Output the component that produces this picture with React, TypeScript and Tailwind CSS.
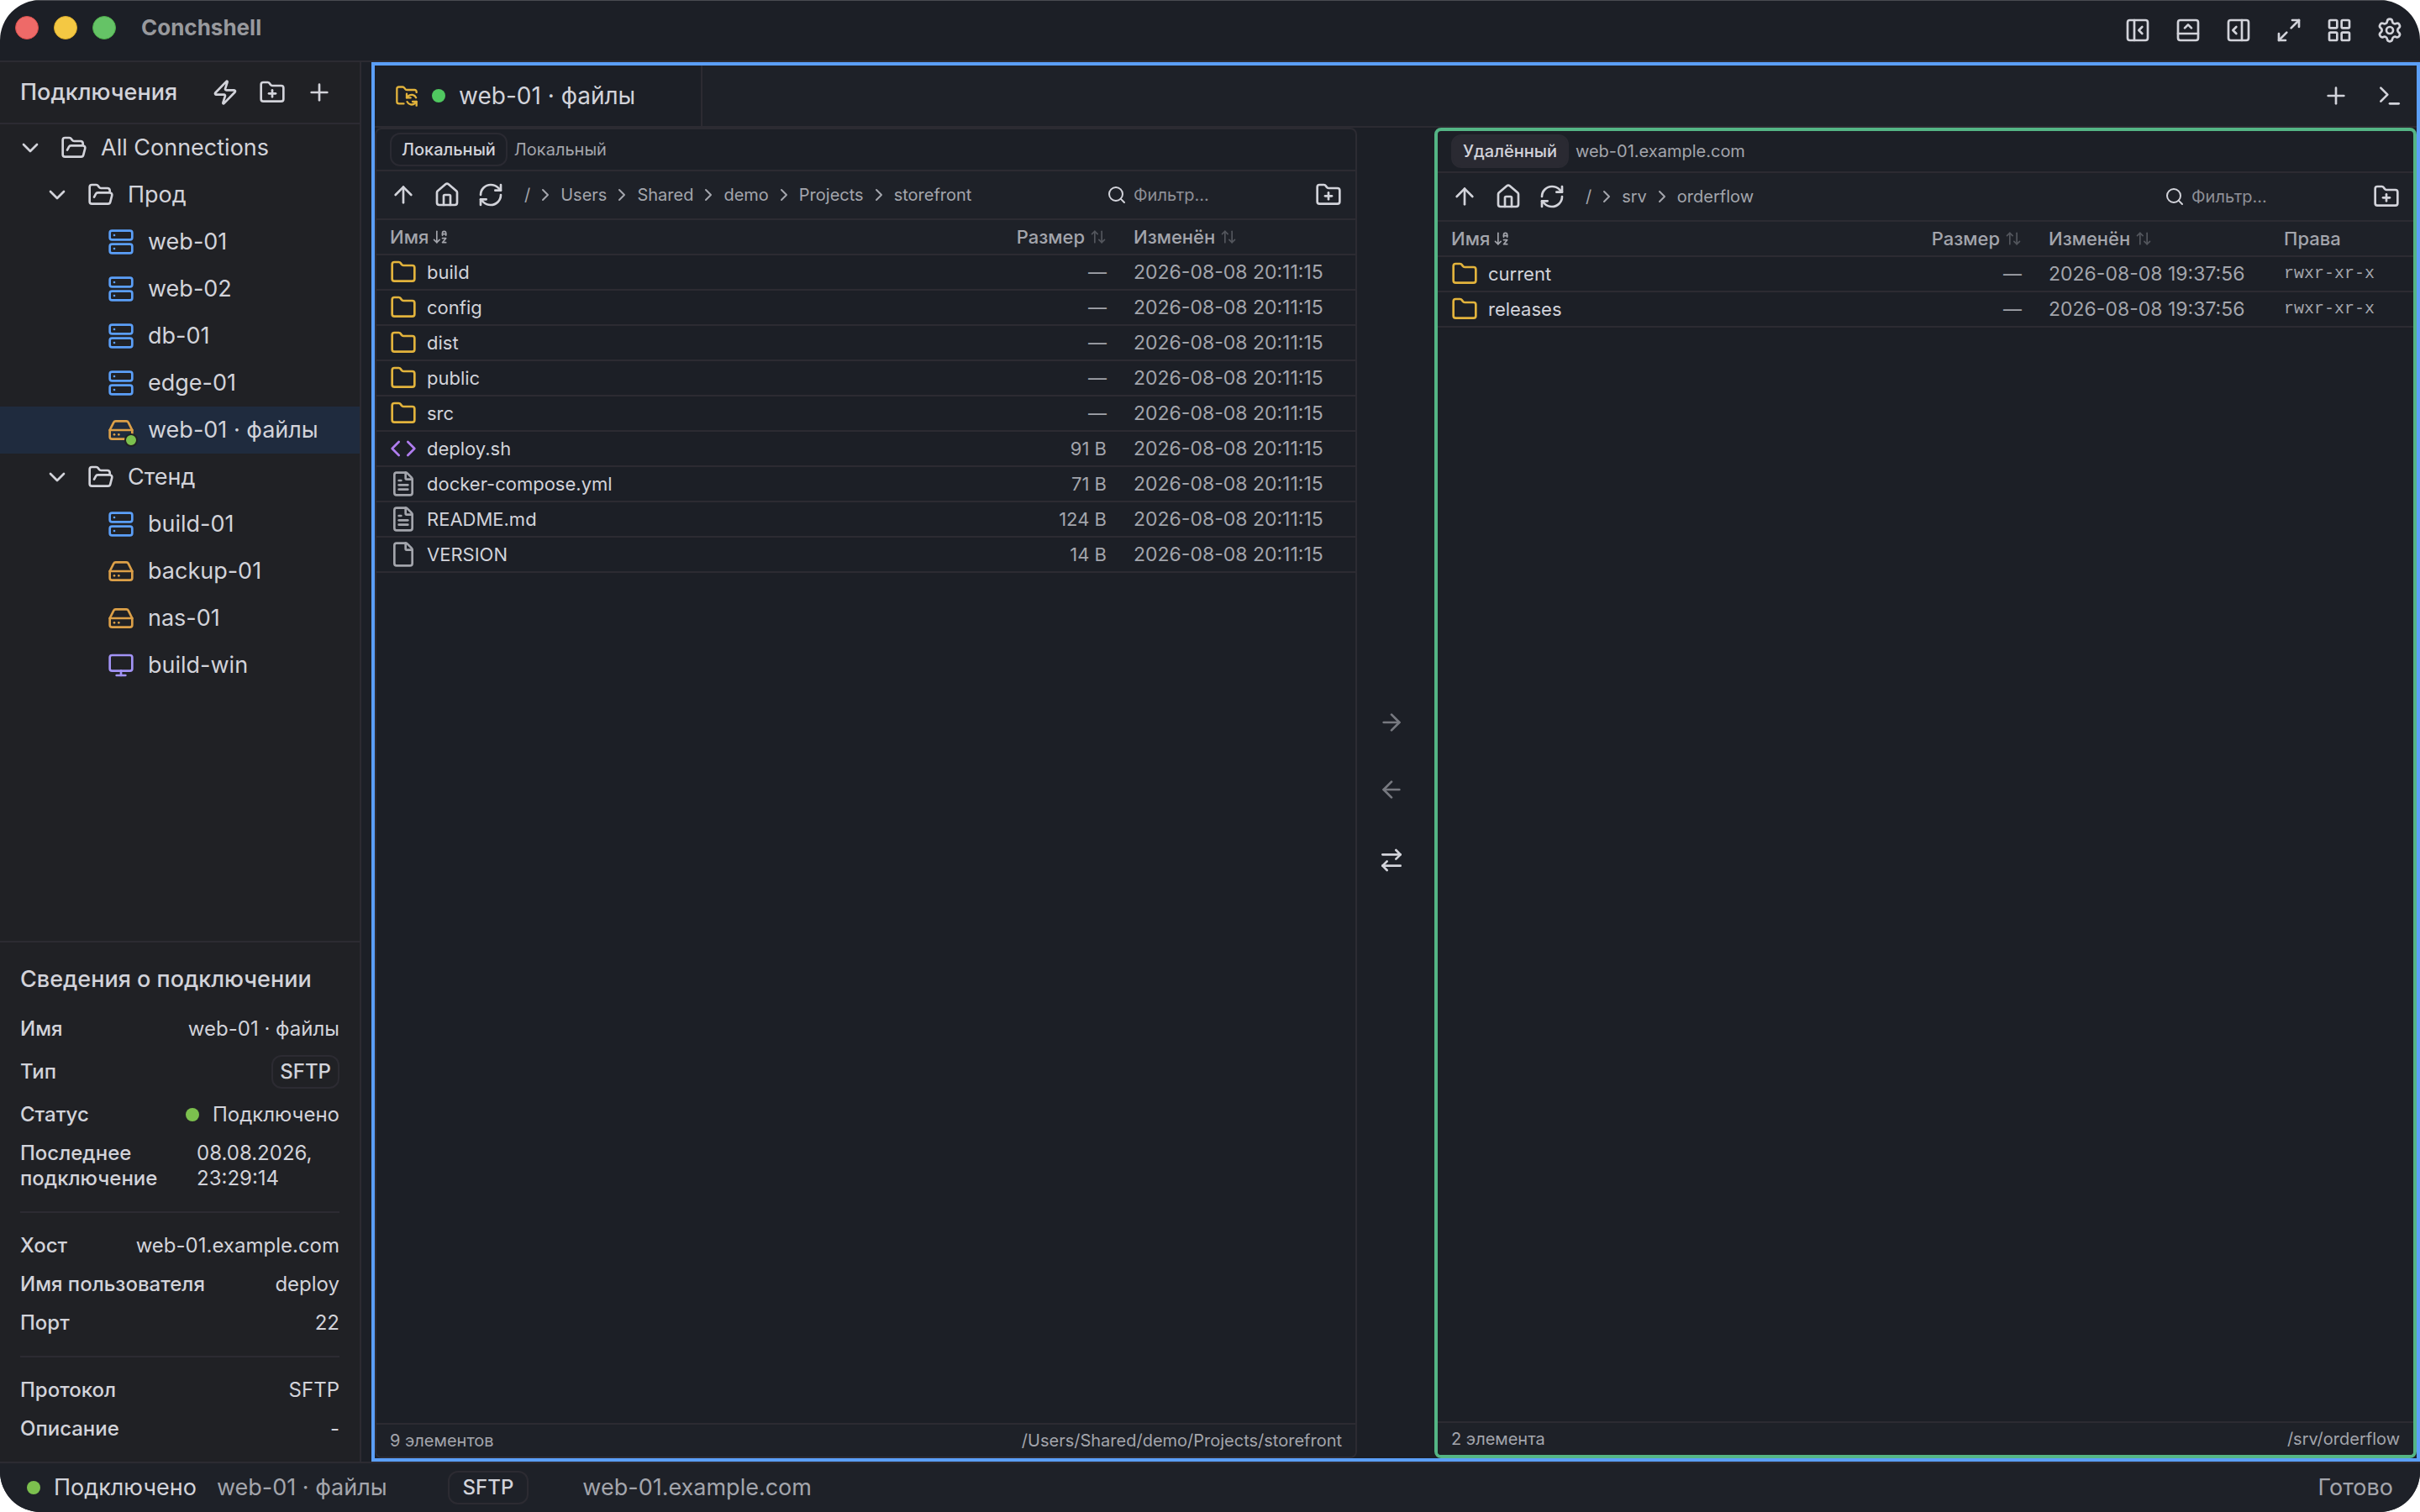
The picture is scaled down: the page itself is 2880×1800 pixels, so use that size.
import { ReactNode } from "react"
import { ArrowDownAZ, ArrowLeft, ArrowRight, ArrowRightLeft, ArrowUp, ArrowUpDown, ChevronDown, ChevronRight, Code, File, FileText, Folder, FolderOpen, FolderPlus, FolderSync, HardDrive, House, LayoutGrid, LucideIcon, Maximize2, Monitor, PanelBottomOpen, PanelLeftClose, PanelRightOpen, Plus, RefreshCw, Search, Server, Settings, Terminal, Zap } from "lucide-react"

type Connection = {
    name: string
    icon: LucideIcon
    color: string
    active?: boolean
}

type Entry = {
    name: string
    icon: LucideIcon
    color: string
    size: string
    date: string
    mode?: string
}

const BLUE = "text-[#5b9ff8]"
const ORANGE = "text-[#dca048]"
const YELLOW = "text-[#e2b33c]"
const GRAY = "text-[#a3a5ac]"

const groups: { name: string, items: Connection[] }[] = [
    {
        name: "Прод",
        items: [
            { name: "web-01", icon: Server, color: BLUE },
            { name: "web-02", icon: Server, color: BLUE },
            { name: "db-01", icon: Server, color: BLUE },
            { name: "edge-01", icon: Server, color: BLUE },
            { name: "web-01 · файлы", icon: HardDrive, color: ORANGE, active: true },
        ]
    },
    {
        name: "Стенд",
        items: [
            { name: "build-01", icon: Server, color: BLUE },
            { name: "backup-01", icon: HardDrive, color: ORANGE },
            { name: "nas-01", icon: HardDrive, color: ORANGE },
            { name: "build-win", icon: Monitor, color: "text-[#a293f5]" },
        ]
    }
]

const localDate = "2026-08-08 20:11:15"
const remoteDate = "2026-08-08 19:37:56"

const localFiles: Entry[] = [
    { name: "build", icon: Folder, color: YELLOW, size: "—", date: localDate },
    { name: "config", icon: Folder, color: YELLOW, size: "—", date: localDate },
    { name: "dist", icon: Folder, color: YELLOW, size: "—", date: localDate },
    { name: "public", icon: Folder, color: YELLOW, size: "—", date: localDate },
    { name: "src", icon: Folder, color: YELLOW, size: "—", date: localDate },
    { name: "deploy.sh", icon: Code, color: "text-[#b07df0]", size: "91 B", date: localDate },
    { name: "docker-compose.yml", icon: FileText, color: GRAY, size: "71 B", date: localDate },
    { name: "README.md", icon: FileText, color: GRAY, size: "124 B", date: localDate },
    { name: "VERSION", icon: File, color: GRAY, size: "14 B", date: localDate },
]

const remoteFiles: Entry[] = [
    { name: "current", icon: Folder, color: YELLOW, size: "—", date: remoteDate, mode: "rwxr-xr-x" },
    { name: "releases", icon: Folder, color: YELLOW, size: "—", date: remoteDate, mode: "rwxr-xr-x" },
]

const IconButton = ({ icon: Icon, label, className = "" }: { icon: LucideIcon, label: string, className?: string }) => (
    <button type="button" aria-label={label} className={`shrink-0 ${className}`}>
        <Icon className="size-8" />
    </button>
)

const TitleBar = () => <header className="flex h-[74px] shrink-0 items-center justify-between border-t border-b-2 border-t-[#4a4c51] border-b-[#2c2b32] pr-5 pl-[18px]">
    <div className="flex items-center gap-[18px] pb-2">
        <button type="button" aria-label="Закрыть" className="size-7 rounded-full border border-[#d8504d] bg-[#ee6a68]" />
        <button type="button" aria-label="Свернуть" className="size-7 rounded-full border border-[#d9ab2b] bg-[#f4c843]" />
        <button type="button" aria-label="Развернуть" className="size-7 rounded-full border border-[#4eac4b] bg-[#65c366]" />
        <h1 className="ml-3 text-[26px] leading-8 font-bold text-[#98999d]">Conchshell</h1>
    </div>
    <nav className="flex items-center gap-7 pb-0.5">
        <IconButton icon={PanelLeftClose} label="Левая панель" />
        <IconButton icon={PanelBottomOpen} label="Нижняя панель" />
        <IconButton icon={PanelRightOpen} label="Правая панель" />
        <IconButton icon={Maximize2} label="Во весь экран" />
        <IconButton icon={LayoutGrid} label="Сетка" />
        <IconButton icon={Settings} label="Настройки" />
    </nav>
</header>

const Group = ({ name, root }: { name: string, root?: boolean }) => (
    <button type="button" className={`flex h-14 w-full items-center text-[27px] ${root ? "pl-5" : "pl-[52px]"}`}>
        <ChevronDown className="size-8" />
        <FolderOpen className="ml-5 size-8" />
        <span className="ml-4">{name}</span>
    </button>
)

const Tree = () => <div className="min-h-0 flex-1 overflow-hidden">
    <Group name="All Connections" root />
    {groups.map(group => <div key={group.name}>
        <Group name={group.name} />
        {group.items.map(({ name, icon: Icon, color, active }) => (
            <button key={name} type="button" className={`flex h-14 w-full items-center gap-4 pl-32 text-[27px] ${active ? "bg-[#1f2b3e]" : ""}`}>
                <span className="relative">
                    <Icon className={`size-8 ${color}`} />
                    {active && <span className="absolute -right-1 -bottom-1 size-4 rounded-full border-2 border-[#202125] bg-[#7cc04e]" />}
                </span>
                <span>{name}</span>
            </button>
        ))}
    </div>)}
</div>

const Detail = ({ label, children }: { label: string, children: ReactNode }) => (
    <div className="flex items-center justify-between">
        <dt className="font-medium">{label}</dt>
        <dd>{children}</dd>
    </div>
)

const Badge = ({ children, wide }: { children: ReactNode, wide?: boolean }) => (
    <span className={`flex h-10 items-center rounded-xl border-2 border-[#2c2b32] text-2xl font-medium ${wide ? "px-4" : "px-2"}`}>{children}</span>
)

const Details = () => <section className="border-t-2 border-[#2c2b32] p-6 text-2xl leading-[30px]">
    <h2 className="mb-6 text-[27px] leading-10 font-medium">Сведения о подключении</h2>
    <dl className="flex flex-col gap-4">
        <Detail label="Имя">web-01 · файлы</Detail>
        <Detail label="Тип"><Badge>SFTP</Badge></Detail>
        <Detail label="Статус">
            <span className="flex items-center gap-4"><span className="size-4 rounded-full bg-[#7cc04e]" />Подключено</span>
        </Detail>
        <div className="flex justify-between">
            <dt className="w-44 font-medium">Последнее подключение</dt>
            <dd className="w-[170px]">08.08.2026, 23:29:14</dd>
        </div>
    </dl>
    <hr className="my-6 border-t-2 border-[#2c2b32]" />
    <dl className="flex flex-col gap-4">
        <Detail label="Хост">web-01.example.com</Detail>
        <Detail label="Имя пользователя">deploy</Detail>
        <Detail label="Порт">22</Detail>
    </dl>
    <hr className="my-6 border-t-2 border-[#2c2b32]" />
    <dl className="flex flex-col gap-4">
        <Detail label="Протокол">SFTP</Detail>
        <Detail label="Описание">-</Detail>
    </dl>
</section>

const Sidebar = () => <aside className="flex w-[430px] shrink-0 flex-col border-r-2 border-[#2c2b32] bg-[#202125]">
    <div className="flex h-[74px] shrink-0 items-center border-b-2 border-[#2c2b32] pr-8 pl-6">
        <h2 className="flex-1 text-[27px] font-medium">Подключения</h2>
        <div className="flex items-center gap-6">
            <IconButton icon={Zap} label="Быстрое подключение" />
            <IconButton icon={FolderPlus} label="Новая папка" />
            <IconButton icon={Plus} label="Новое подключение" />
        </div>
    </div>
    <Tree />
    <Details />
</aside>

type PaneProps = {
    label: string
    host: string
    path: string[]
    files: Entry[]
    count: string
    location: string
    active?: boolean
}

const Pane = ({ label, host, path, files, count, location, active }: PaneProps) => {
    const filterId = active ? "filter-remote" : "filter-local"

    return <section className={`flex min-w-0 flex-col overflow-hidden rounded-lg ${active ? "border-4 border-[#54b585]" : "border-2 border-[#2c2b32]"}`}>
        <div className="flex h-[50px] shrink-0 items-center gap-2 border-b-2 border-[#2c2b32] px-4 text-xl">
            <span className={`flex h-10 items-center rounded-xl border-2 border-[#2a2a32] px-3 font-medium ${active ? "bg-[#2a2a32]" : ""}`}>{label}</span>
            <span className="text-[#a3a5ac]">{host}</span>
        </div>
        <div className="flex h-[58px] shrink-0 items-center justify-between border-b-2 border-[#2c2b32] bg-[#1e2128] px-4">
            <div className="flex items-center gap-5">
                <IconButton icon={ArrowUp} label="Вверх" />
                <IconButton icon={House} label="Домой" />
                <IconButton icon={RefreshCw} label="Обновить" />
                <nav className="ml-1 flex items-center gap-1.5 text-xl text-[#a3a5ac]">
                    <a href="#">/</a>
                    {path.map(part => <span key={part} className="flex items-center gap-1.5">
                        <ChevronRight className="size-6" />
                        <a href="#">{part}</a>
                    </span>)}
                </nav>
            </div>
            <div className="flex items-center gap-4">
                <label htmlFor={filterId} className="flex w-[232px] items-center gap-2">
                    <Search className="size-6 shrink-0" />
                    <input id={filterId} type="text" placeholder="Фильтр..." className="w-full min-w-0 bg-transparent text-xl outline-none placeholder:text-[#8e9097]" />
                </label>
                <IconButton icon={FolderPlus} label="Новая папка" />
            </div>
        </div>
        <div className="min-h-0 flex-1 overflow-hidden">
            <table className="w-full table-fixed border-separate border-spacing-0 text-[22px] leading-8 text-[#a3a5ac]">
                <thead>
                    <tr className="bg-[#1e2128] *:h-[42px] *:border-b-2 *:border-[#2c2b32] *:px-4">
                        <th className="text-left font-medium">
                            <span className="flex items-center gap-1">Имя<ArrowDownAZ className="size-5" /></span>
                        </th>
                        <th className="w-40 font-medium">
                            <span className="flex items-center justify-end gap-1.5">Размер<ArrowUpDown className="size-5 opacity-40" /></span>
                        </th>
                        <th className="w-[280px] font-medium">
                            <span className="flex items-center gap-1.5">Изменён<ArrowUpDown className="size-5 opacity-40" /></span>
                        </th>
                        {active && <th className="w-[170px] text-left font-medium">Права</th>}
                    </tr>
                </thead>
                <tbody>
                    {files.map(({ name, icon: Icon, color, size, date, mode }) => <tr key={name} className="*:h-[42px] *:border-b-2 *:border-[#2c2b32] *:px-4">
                        <td className="text-[#d2d3da]">
                            <span className="flex items-center gap-3"><Icon className={`size-8 ${color}`} />{name}</span>
                        </td>
                        <td className="text-right">{size}</td>
                        <td className="text-[23px]">{date}</td>
                        {mode && <td className="font-['Liberation_Mono',monospace] text-xl leading-8">{mode}</td>}
                    </tr>)}
                </tbody>
            </table>
        </div>
        <footer className="flex h-10 shrink-0 items-center justify-between border-t-2 border-[#2c2b32] bg-[#1e2128] px-4 text-xl text-[#a3a5ac]">
            <span>{count}</span>
            <span>{location}</span>
        </footer>
    </section>
}

const Workspace = () => <main className="ml-3 flex min-w-0 flex-1 flex-col border-4 border-[#5b9ff8]">
    <div className="flex h-[74px] shrink-0 items-center justify-between border-b-2 border-[#2c2b32] bg-[#1e2128] pr-4">
        <button type="button" className="flex h-full w-[390px] items-center border-r-2 border-[#2c2b32] bg-[#1c1f26] pl-6 text-[28px]">
            <FolderSync className="size-7 text-[#e2b33c]" />
            <span className="ml-4 size-4 rounded-full bg-[#50c860]" />
            <span className="ml-4">web-01 · файлы</span>
        </button>
        <div className="flex items-center gap-8">
            <IconButton icon={Plus} label="Новая вкладка" />
            <IconButton icon={Terminal} label="Терминал" />
        </div>
    </div>
    <div className="grid min-h-0 flex-1 grid-cols-[minmax(0,1fr)_92px_minmax(0,1fr)]">
        <Pane label="Локальный" host="Локальный" path={["Users", "Shared", "demo", "Projects", "storefront"]} files={localFiles} count="9 элементов" location="/Users/Shared/demo/Projects/storefront" />
        <div className="flex flex-col items-center justify-center pr-2.5 pb-1">
            <IconButton icon={ArrowRight} label="Отправить" className="opacity-50" />
            <IconButton icon={ArrowLeft} label="Получить" className="mt-12 opacity-50" />
            <IconButton icon={ArrowRightLeft} label="Синхронизировать" className="mt-13" />
        </div>
        <Pane label="Удалённый" host="web-01.example.com" path={["srv", "orderflow"]} files={remoteFiles} count="2 элемента" location="/srv/orderflow" active />
    </div>
</main>

const StatusBar = () => <footer className="flex h-[60px] shrink-0 items-center border-t-2 border-[#2c2b32] bg-[#1e2128] px-8 text-[27px] text-[#a3a5ac]">
    <span className="size-4 rounded-full bg-[#7cc04e]" />
    <span className="ml-4 text-[#d2d3da]">Подключено</span>
    <span className="ml-6">web-01 · файлы</span>
    <span className="mr-16 ml-18 text-[#d2d3da]"><Badge wide>SFTP</Badge></span>
    <span>web-01.example.com</span>
    <span className="ml-auto">Готово</span>
</footer>

export default function App() {
    return <div className="h-screen bg-white">
        <div className="flex h-full flex-col overflow-hidden rounded-[48px] bg-[#1c1f26] font-[Inter,sans-serif] text-[#d2d3da]">
            <TitleBar />
            <div className="flex min-h-0 flex-1">
                <Sidebar />
                <Workspace />
            </div>
            <StatusBar />
        </div>
    </div>
}
